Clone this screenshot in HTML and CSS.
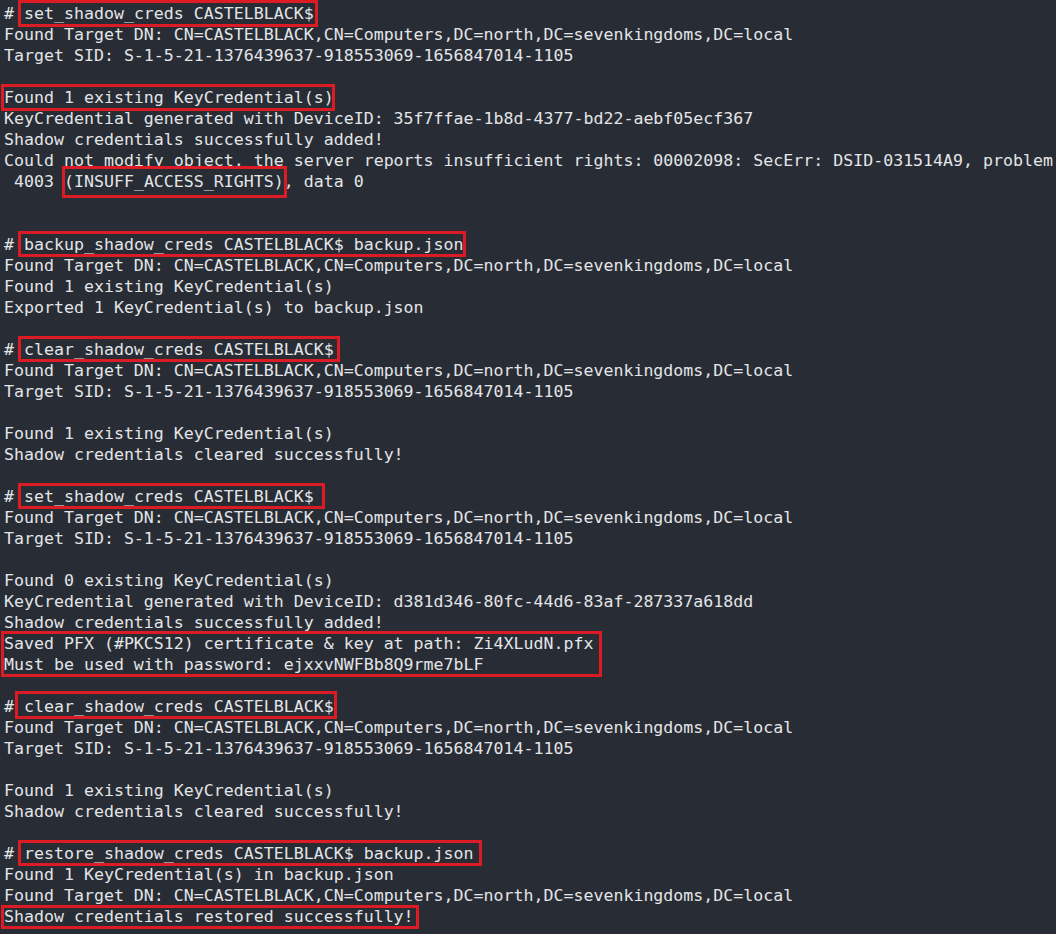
FILE: index.html
```html
<!DOCTYPE html>
<html lang="en">
<head>
<meta charset="utf-8">
<title>Shadow credentials terminal</title>
<link rel="stylesheet" href="styles.css">
</head>
<body>
<main class="term">
  <div class="ln"># <span class="hl b1">set_shadow_creds CASTELBLACK$</span></div>
  <div class="ln">Found Target DN: CN=CASTELBLACK,CN=Computers,DC=north,DC=sevenkingdoms,DC=local</div>
  <div class="ln">Target SID: S-1-5-21-1376439637-918553069-1656847014-1105</div>
  <div class="ln"> </div>
  <div class="ln"><span class="hl b2">Found 1 existing KeyCredential(s)</span></div>
  <div class="ln">KeyCredential generated with DeviceID: 35f7ffae-1b8d-4377-bd22-aebf05ecf367</div>
  <div class="ln">Shadow credentials successfully added!</div>
  <div class="ln">Could not modify object, the server reports insufficient rights: 00002098: SecErr: DSID-031514A9, problem</div>
  <div class="ln"> 4003 <span class="hl b3">(INSUFF_ACCESS_RIGHTS)</span>, data 0</div>
  <div class="ln"> </div>
  <div class="ln"> </div>
  <div class="ln"># <span class="hl b4">backup_shadow_creds CASTELBLACK$ backup.json</span></div>
  <div class="ln">Found Target DN: CN=CASTELBLACK,CN=Computers,DC=north,DC=sevenkingdoms,DC=local</div>
  <div class="ln">Found 1 existing KeyCredential(s)</div>
  <div class="ln">Exported 1 KeyCredential(s) to backup.json</div>
  <div class="ln"> </div>
  <div class="ln"># <span class="hl b5">clear_shadow_creds CASTELBLACK$</span></div>
  <div class="ln">Found Target DN: CN=CASTELBLACK,CN=Computers,DC=north,DC=sevenkingdoms,DC=local</div>
  <div class="ln">Target SID: S-1-5-21-1376439637-918553069-1656847014-1105</div>
  <div class="ln"> </div>
  <div class="ln">Found 1 existing KeyCredential(s)</div>
  <div class="ln">Shadow credentials cleared successfully!</div>
  <div class="ln"> </div>
  <div class="ln"># <span class="hl b6">set_shadow_creds CASTELBLACK$</span></div>
  <div class="ln">Found Target DN: CN=CASTELBLACK,CN=Computers,DC=north,DC=sevenkingdoms,DC=local</div>
  <div class="ln">Target SID: S-1-5-21-1376439637-918553069-1656847014-1105</div>
  <div class="ln"> </div>
  <div class="ln">Found 0 existing KeyCredential(s)</div>
  <div class="ln">KeyCredential generated with DeviceID: d381d346-80fc-44d6-83af-287337a618dd</div>
  <div class="ln">Shadow credentials successfully added!</div>
  <div class="hl-block b7">
    <div class="ln">Saved PFX (#PKCS12) certificate &amp; key at path: Zi4XLudN.pfx</div>
    <div class="ln">Must be used with password: ejxxvNWFBb8Q9rme7bLF</div>
  </div>
  <div class="ln"> </div>
  <div class="ln"># <span class="hl b8">clear_shadow_creds CASTELBLACK$</span></div>
  <div class="ln">Found Target DN: CN=CASTELBLACK,CN=Computers,DC=north,DC=sevenkingdoms,DC=local</div>
  <div class="ln">Target SID: S-1-5-21-1376439637-918553069-1656847014-1105</div>
  <div class="ln"> </div>
  <div class="ln">Found 1 existing KeyCredential(s)</div>
  <div class="ln">Shadow credentials cleared successfully!</div>
  <div class="ln"> </div>
  <div class="ln"># <span class="hl b9">restore_shadow_creds CASTELBLACK$ backup.json</span></div>
  <div class="ln">Found 1 KeyCredential(s) in backup.json</div>
  <div class="ln">Found Target DN: CN=CASTELBLACK,CN=Computers,DC=north,DC=sevenkingdoms,DC=local</div>
  <div class="ln"><span class="hl b10">Shadow credentials restored successfully!</span></div>
</main>
</body>
</html>
```

FILE: styles.css
```css
html, body {
  margin: 0;
  padding: 0;
  background: #282c34;
}

body {
  width: 1056px;
  height: 934px;
  overflow: hidden;
}

.term {
  padding: 3px 0 0 4px;
  font-family: "DejaVu Sans Mono", "Liberation Mono", monospace;
  font-size: 16.6px;
  line-height: 21px;
  color: #e3e5e8;
}

.ln {
  height: 21px;
  white-space: pre;
}

.hl {
  position: relative;
  display: inline-block;
  height: 21px;
  vertical-align: top;
}

.hl-block {
  position: relative;
  width: fit-content;
}

.hl::after,
.hl-block::after {
  content: "";
  position: absolute;
  border: 3px solid #dc1b24;
  pointer-events: none;
}

.b1::after  { left: -6px; right: -4px;  top: -3px; bottom: -3px; }
.b2::after  { left: -3px; right: -1px;  top: -3px; bottom: -3px; }
.b3::after  { left: -2px; right: -3px;  top: -5px; bottom: -6px; }
.b4::after  { left: -6px; right: -2px;  top: -3px; bottom: -2px; }
.b5::after  { left: -6px; right: -6px;  top: -3px; bottom: -2px; }
.b6::after  { left: -6px; right: -11px; top: -3px; bottom: -2px; }
.b7::after  { left: -3px; right: -9px;  top: -2px; bottom: -2px; }
.b8::after  { left: -9px; right: -3px;  top: -5px; bottom: -2px; }
.b9::after  { left: -6px; right: -8px;  top: -3px; bottom: -2px; }
.b10::after { left: -3px; right: -5px;  top: -1px; bottom: -2px; }
```
